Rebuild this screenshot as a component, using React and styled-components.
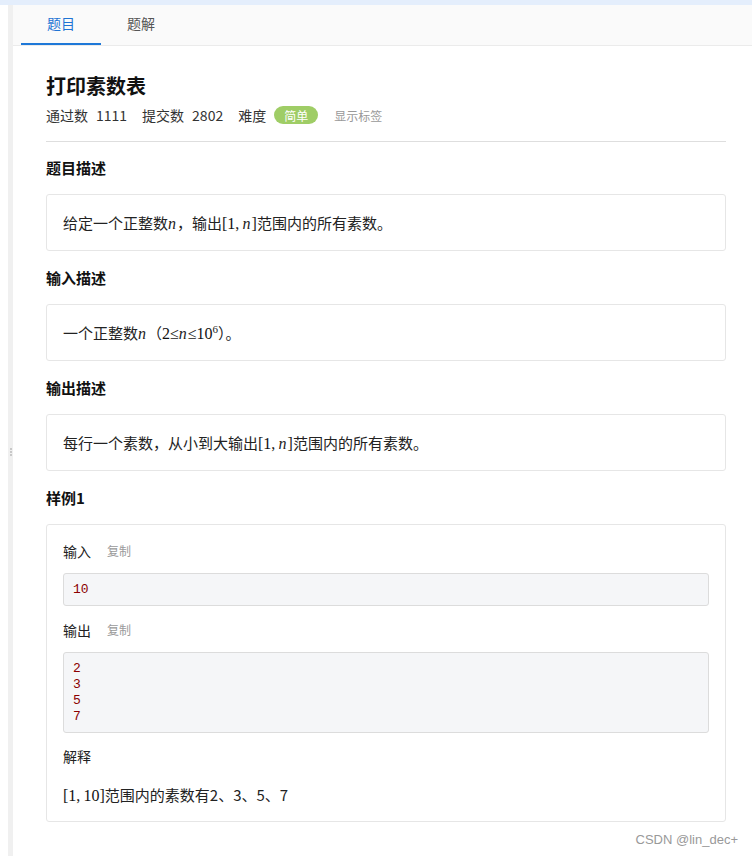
import React from 'react'
import styled, { createGlobalStyle } from 'styled-components'

const GlobalStyle = createGlobalStyle`
  html, body {
    margin: 0;
    padding: 0;
    background: #fff;
  }
  body {
    font-family: "Noto Sans CJK SC", "Noto Sans", sans-serif;
    color: #222;
  }
  * { box-sizing: border-box; }
`

const TopStrip = styled.div`
  height: 5px;
  background: #e4eefc;
`

const Layout = styled.div`
  display: flex;
  min-height: calc(100vh - 5px);
`

const Gutter = styled.div`
  width: 13px;
  flex-shrink: 0;
  padding-left: 8px;
  display: flex;
`

const Splitter = styled.div`
  width: 5px;
  background: #f0f0f0;
  display: flex;
  flex-direction: column;
  align-items: center;
  justify-content: center;
  gap: 1px;
  padding-top: 43px;
  span {
    width: 2px;
    height: 2px;
    background: #c8c8c8;
  }
`

const Main = styled.div`
  flex: 1;
  min-width: 0;
`

const TabBar = styled.div`
  display: flex;
  height: 41px;
  padding-left: 8px;
  background: #fafafa;
  border-bottom: 1px solid #ebebeb;
`

const Tab = styled.div`
  width: 80px;
  height: 40px;
  display: flex;
  align-items: center;
  justify-content: center;
  font-size: 14px;
  color: ${p => (p.$active ? '#1f74d4' : '#555')};
  border-bottom: 2px solid ${p => (p.$active ? '#1e78d8' : 'transparent')};
  padding-bottom: 2px;
`

const Content = styled.div`
  padding: 26px 26px 0 33px;
`

const Title = styled.h1`
  margin: 0;
  font-size: 20px;
  line-height: 28px;
  font-weight: 700;
  color: #111;
`

const Meta = styled.div`
  margin-top: 4px;
  height: 22px;
  display: flex;
  align-items: center;
  font-size: 14px;
  color: #333;
`

const MetaLabel = styled.span`
  margin-right: 8px;
`

const MetaValue = styled.span`
  margin-right: 15px;
`

const Badge = styled.span`
  display: inline-flex;
  align-items: center;
  justify-content: center;
  width: 44px;
  height: 18px;
  border-radius: 9px;
  background: #9fcd66;
  color: #fff;
  font-size: 12px;
  margin-right: 16px;
`

const TagToggle = styled.span`
  font-size: 12px;
  color: #999;
`

const Divider = styled.hr`
  margin: 15px 0 0;
  border: 0;
  border-top: 1px solid #dedede;
`

const Heading = styled.h3`
  margin: ${p => (p.$first ? '14px' : '15px')} 0 0;
  font-size: 15px;
  line-height: 24px;
  font-weight: 700;
  color: #111;
`

const Box = styled.div`
  margin-top: 14px;
  height: 57px;
  border: 1px solid #e6e6e6;
  border-radius: 3px;
  padding: 16px 16px;
  font-size: 15px;
  line-height: 23px;
  color: #222;
`

const SampleBox = styled.div`
  margin-top: 14px;
  border: 1px solid #e6e6e6;
  border-radius: 3px;
  padding: 16px 16px 14px;
`

const IoLabel = styled.div`
  margin-top: ${p => p.$gap || 0}px;
  font-size: 14px;
  line-height: 20px;
  color: #222;
  display: flex;
  gap: 16px;
`

const Copy = styled.span`
  font-size: 12px;
  color: #9a9a9a;
`

const Code = styled.pre`
  margin: 12px 0 0;
  background: #f5f6f8;
  border: 1px solid #dcdcdc;
  border-radius: 3px;
  padding: ${p => (p.$multi ? '8px 9px 7px' : '7px 9px')};
  font-family: "Liberation Mono", "DejaVu Sans Mono", monospace;
  font-size: 13px;
  line-height: ${p => (p.$multi ? '16px' : '17px')};
  color: #8b0000;
`

const Explain = styled.div`
  margin-top: 17px;
  height: 24px;
  font-size: 15px;
  line-height: 24px;
  color: #222;
`

const Math = styled.span`
  font-family: "Liberation Serif", "DejaVu Serif", serif;
  font-size: 16px;
  line-height: 1;
`

const Var = styled.i`
  font-family: "Liberation Serif", "DejaVu Serif", serif;
  font-size: 16px;
  line-height: 1;
  margin-right: 1px;
`

const Num = styled.span`
  font-weight: 400;
  color: #111;
`

const Sup = styled.sup`
  font-size: 11px;
  line-height: 0;
`

const Watermark = styled.div`
  text-align: right;
  padding: 9px 14px 0 0;
  font-family: "Liberation Sans", Arial, sans-serif;
  font-size: 13px;
  line-height: 18px;
  color: #999;
`

function Range({ to }) {
  return (
    <Math>
      [<Num>1</Num>,&thinsp;{to === 'n' ? <Var>n</Var> : <Num>{to}</Num>}]
    </Math>
  )
}

export default function App() {
  return (
    <>
      <GlobalStyle />
      <TopStrip />
      <Layout>
        <Gutter>
          <Splitter>
            <span />
            <span />
            <span />
          </Splitter>
        </Gutter>
        <Main>
          <TabBar>
            <Tab $active>题目</Tab>
            <Tab>题解</Tab>
          </TabBar>
          <Content>
            <Title>打印素数表</Title>
            <Meta>
              <MetaLabel>通过数</MetaLabel>
              <MetaValue>1111</MetaValue>
              <MetaLabel>提交数</MetaLabel>
              <MetaValue>2802</MetaValue>
              <MetaLabel>难度</MetaLabel>
              <Badge>简单</Badge>
              <TagToggle>显示标签</TagToggle>
            </Meta>
            <Divider />

            <Heading $first>题目描述</Heading>
            <Box>
              给定一个正整数<Var>n</Var>，输出<Range to="n" />范围内的所有素数。
            </Box>

            <Heading>输入描述</Heading>
            <Box>
              一个正整数<Var>n</Var>（
              <Math>
                <Num>2</Num>≤<Var>n</Var>≤<Num>10</Num>
                <Sup>6</Sup>
              </Math>
              ）。
            </Box>

            <Heading>输出描述</Heading>
            <Box>
              每行一个素数，从小到大输出<Range to="n" />范围内的所有素数。
            </Box>

            <Heading>样例1</Heading>
            <SampleBox>
              <IoLabel>
                输入<Copy>复制</Copy>
              </IoLabel>
              <Code>10</Code>
              <IoLabel $gap={14}>
                输出<Copy>复制</Copy>
              </IoLabel>
              <Code $multi>{'2\n3\n5\n7'}</Code>
              <IoLabel $gap={13}>解释</IoLabel>
              <Explain>
                <Range to="10" />范围内的素数有2、3、5、7
              </Explain>
            </SampleBox>
          </Content>
          <Watermark>CSDN @lin_dec+</Watermark>
        </Main>
      </Layout>
    </>
  )
}
